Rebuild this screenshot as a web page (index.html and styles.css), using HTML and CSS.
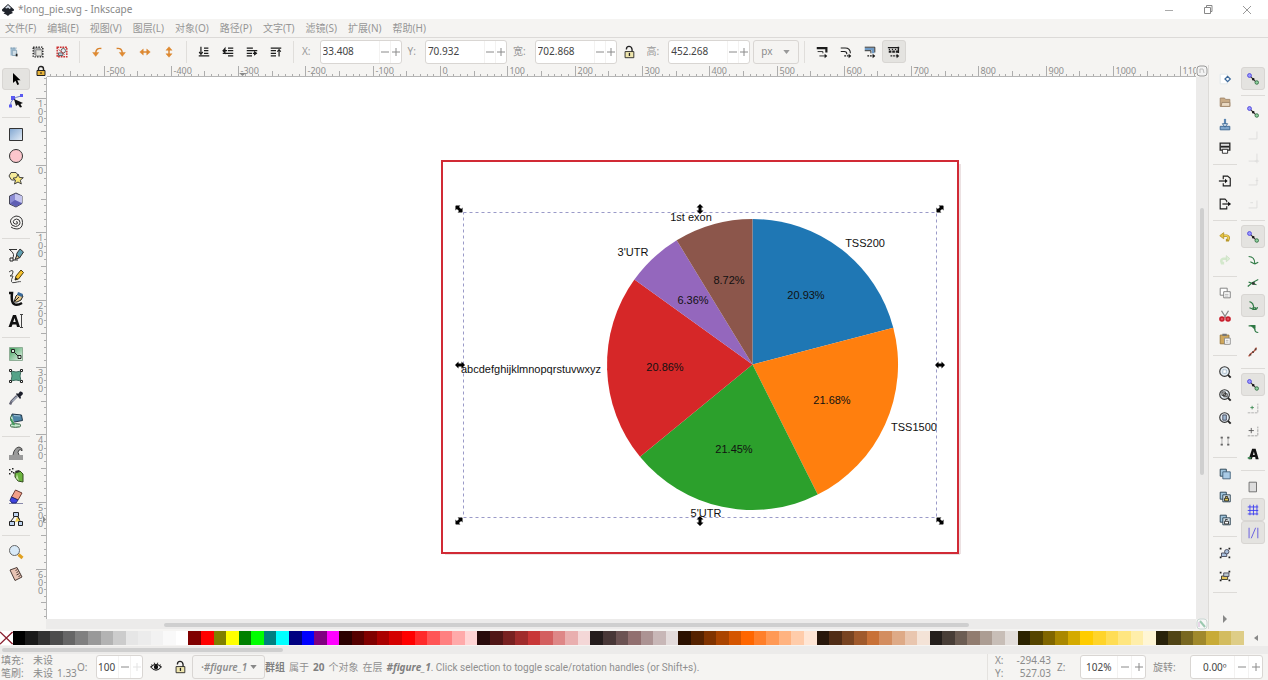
FILE: index.html
```html
<!DOCTYPE html>
<html lang="zh-CN">
<head>
<meta charset="utf-8">
<meta name="viewport" content="width=device-width, initial-scale=1">
<title>*long_pie.svg - Inkscape</title>
<link rel="stylesheet" href="styles.css">
</head>
<body>
<svg class="defs" aria-hidden="true">
  <symbol id="snap" viewBox="0 0 16 16"><path d="M5 5l6 6" stroke="#333" stroke-width="1.3"/><circle cx="4" cy="4" r="2.200" fill="#9a9aff" stroke="#4a40d8"/><circle cx="12.300" cy="12" r="2" fill="#8fd09f" stroke="#2f6b3e"/><path d="M7 7h2.500v2.500H7z" fill="#111"/></symbol>
  <symbol id="lens" viewBox="0 0 16 16"><path d="M11 11l3.500 3.500" stroke="#222" stroke-width="2.200"/><circle cx="7.500" cy="7.500" r="5.500" fill="#e3ecf3" stroke="#333" stroke-width="1.300"/></symbol>
  <symbol id="lock" viewBox="0 0 16 16"><path d="M5 5q0-3.500 3-3.500T11.500 5v3" fill="none" stroke="#222" stroke-width="1.500"/><path d="M3.500 7.500h10v7h-10z" fill="#efe6ad" stroke="#222"/><path d="M8.500 9v3.500" stroke="#222" stroke-width="1.500"/></symbol>
  <symbol id="grip" viewBox="-5 -5 10 10"><path d="M-5 0L-1.500-3.500V-1.500H1.500V-3.500L5 0L1.500 3.500V1.500H-1.500V3.500Z"/></symbol>
  <symbol id="minus" viewBox="0 0 8 8"><path d="M0 4h8" stroke="currentColor"/></symbol>
  <symbol id="plus" viewBox="0 0 8 8"><path d="M0 4h8M4 0v8" stroke="currentColor"/></symbol>
</svg>

<header class="titlebar">
  <svg class="logo" viewBox="0 0 14 14"><path d="M7 1L13 6.500Q13.500 8 10.500 8.500L12 10L8.500 11.500L7 13L5 11.500L2.500 10.500L4 9Q.500 8.500 1 6.500Z" fill="#20242c"/><path d="M7 2L4 5l2 .5L7 4.500 8.500 6 10 5Z" fill="#d9e1ec"/></svg>
  <h1>*long_pie.svg - Inkscape</h1>
  <button aria-label="最小化"><svg viewBox="0 0 10 10"><path d="M1 5.500h8" stroke="#aaa"/></svg></button>
  <button aria-label="还原"><svg viewBox="0 0 10 10"><path d="M1.500 2.500h6v6h-6zM3.500 2V.500h5.500v6H8" fill="none" stroke="#888"/></svg></button>
  <button aria-label="关闭"><svg viewBox="0 0 10 10"><path d="M1 1l8 8M9 1L1 9" stroke="#999"/></svg></button>
</header>

<nav class="menubar">
  <a href="#file">文件(F)</a><a href="#edit">编辑(E)</a><a href="#view">视图(V)</a><a href="#layer">图层(L)</a><a href="#object">对象(O)</a><a href="#path">路径(P)</a><a href="#text">文字(T)</a><a href="#filter">滤镜(S)</a><a href="#ext">扩展(N)</a><a href="#help">帮助(H)</a>
</nav>

<div class="optionbar">
  <button class="tool" aria-label="全选"><svg viewBox="0 0 16 16"><path d="M4 3h6v9H4z" fill="#9ebcd2"/><path d="M6 6h5v6H6z" fill="#cfdde6" stroke="#86a2b5"/><path d="M4 3.500h7" stroke="#7895a8" stroke-dasharray="2 1"/><path d="M10 10h2v3h-2z" fill="#222"/></svg></button>
  <button class="tool" aria-label="在所有图层全选"><svg viewBox="0 0 16 16"><path d="M3.500 3.500h7v7h-7z" fill="#c7cbcd" stroke="#777"/><path d="M5.500 5.500h7v7h-7z" fill="#e5e5e0" stroke="#777"/><path d="M2.500 2.500h11v11h-11z" fill="none" stroke="#111" stroke-width="1.500" stroke-dasharray="1.500 1.500"/></svg></button>
  <button class="tool" aria-label="取消选择"><svg viewBox="0 0 16 16"><path d="M2.500 2.500h11v11h-11z" fill="#eee" stroke="#cc3030" stroke-width="1.600" stroke-dasharray="2 1"/><path d="M4 9h5v3H4z" fill="#b8cbe0" stroke="#555"/><circle cx="9.500" cy="6.500" r="2.500" fill="#e9eef4" stroke="#555"/><path d="M4 5l7 6" stroke="#c44"/></svg></button>
  <span class="vsep"></span>
  <button class="tool" aria-label="逆时针旋转"><svg viewBox="0 0 16 16" class="orange"><path d="M13 4Q7 3 6.500 9" fill="none"/><path d="M3 8.500h7L6.500 13z"/></svg></button>
  <button class="tool" aria-label="顺时针旋转"><svg viewBox="0 0 16 16" class="orange"><path d="M3 4Q9 3 9.500 9" fill="none"/><path d="M6 8.500h7L9.500 13z"/></svg></button>
  <button class="tool" aria-label="水平翻转"><svg viewBox="0 0 16 16" class="orange"><path d="M4 8h8" fill="none"/><path d="M6 4.500v7L2 8zM10 4.500v7L14 8z"/></svg></button>
  <button class="tool" aria-label="垂直翻转"><svg viewBox="0 0 16 16" class="orange"><path d="M8 4v8" fill="none"/><path d="M4.500 6h7L8 2zM4.500 10h7L8 14z"/></svg></button>
  <span class="vsep"></span>
  <button class="tool" aria-label="移至底层"><svg viewBox="0 0 16 16" class="ink"><path d="M8 3.500h5M8 6.500h5M8 9.500h5M2 12.500h12M4.500 2v8"/><path d="M2.500 8l2 2.500 2-2.500"/></svg></button>
  <button class="tool" aria-label="降低一层"><svg viewBox="0 0 16 16" class="ink"><path d="M8 3.500h6M8 6.500h6M2 9.500h12M8 12.500h6M2 6.500h5"/><path d="M4.500 4v5l-2-2.500z" fill="#1c1c1c"/></svg></button>
  <button class="tool" aria-label="提升一层"><svg viewBox="0 0 16 16" class="ink"><path d="M2 3.500h7M2 6.500h12M2 9.500h6M2 12.500h6M9 9.500h4"/><path d="M11 8l2 1.500-2 1.500z" fill="#1c1c1c"/></svg></button>
  <button class="tool" aria-label="移至顶层"><svg viewBox="0 0 16 16" class="ink"><path d="M2 3.500h12M2 6.500h6M2 9.500h6M2 12.500h6M11.500 13V5"/><path d="M9.500 7.500l2-2 2 2"/></svg></button>
  <span class="vsep"></span>
  <label class="lbl" for="fx">X:</label>
  <span class="spin wide"><input id="fx" value="33.408"><button aria-label="减小 X"><svg><use href="#minus"/></svg></button><button aria-label="增大 X"><svg><use href="#plus"/></svg></button></span>
  <label class="lbl" for="fy">Y:</label>
  <span class="spin wide"><input id="fy" value="70.932"><button aria-label="减小 Y"><svg><use href="#minus"/></svg></button><button aria-label="增大 Y"><svg><use href="#plus"/></svg></button></span>
  <label class="lbl" for="fw">宽:</label>
  <span class="spin wide"><input id="fw" value="702.868"><button aria-label="减小宽"><svg><use href="#minus"/></svg></button><button aria-label="增大宽"><svg><use href="#plus"/></svg></button></span>
  <button class="tool" aria-label="锁定比例"><svg viewBox="0 0 16 16"><use href="#lock"/></svg></button>
  <label class="lbl" for="fh">高:</label>
  <span class="spin wide"><input id="fh" value="452.268"><button aria-label="减小高"><svg><use href="#minus"/></svg></button><button aria-label="增大高"><svg><use href="#plus"/></svg></button></span>
  <span class="combo"><select aria-label="单位"><option>px</option></select><svg viewBox="0 0 8 5"><path d="M0 0h8L4 5z" fill="#999"/></svg></span>
  <span class="vsep"></span>
  <button class="tool" aria-label="缩放笔廓"><svg viewBox="0 0 16 16" class="ink"><path d="M2 3.500h11v5" stroke-width="2.500"/><path d="M3 7.500h6v2M5 12.500h8" stroke-width="1"/><path d="M11 10l3 2.500-3 2.500z" fill="#1c1c1c" stroke="none"/></svg></button>
  <button class="tool" aria-label="缩放圆角"><svg viewBox="0 0 16 16" class="ink"><path d="M2 3.500h5q6 0 6 6M2 7.500h4q3 0 3 3" stroke-width="1.200"/><path d="M6 12.500h7" stroke-dasharray="2 1"/><path d="M11 10l3 2.500-3 2.500z" fill="#1c1c1c" stroke="none"/></svg></button>
  <button class="tool" aria-label="移动渐变"><svg viewBox="0 0 16 16" class="ink"><path d="M2 4.500h9.500v5" stroke="#6f9ac5" stroke-width="3"/><path d="M2 2.500h11.500v6M2 6.500h7v3" stroke-width="1"/><path d="M5 12.500h8" stroke-dasharray="2 1"/><path d="M11 10l3 2.500-3 2.500z" fill="#1c1c1c" stroke="none"/></svg></button>
  <button class="tool on" aria-label="移动图案" aria-pressed="true"><svg viewBox="0 0 16 16" class="ink"><path d="M1 3h13M13 2v7" stroke-width="1.600"/><path d="M2 7.500h12" stroke-width="2.500" stroke-dasharray="3 1"/><path d="M2 5h11" stroke-dasharray="1.500 2"/><path d="M4 12.500h9" stroke-dasharray="2 1"/><path d="M11 10l3 2.500-3 2.500z" fill="#1c1c1c" stroke="none"/></svg></button>
</div>

<main class="middle">
  <div class="toolbox">
    <button class="tool on" aria-label="选择" aria-pressed="true"><svg viewBox="0 0 16 16"><path d="M5 2v10l2.500-2.300L9.300 14l1.800-.8L9.300 9.200h3.200z" fill="#000"/></svg></button>
    <button class="tool" aria-label="节点"><svg viewBox="0 0 16 16"><path d="M2.500 13Q2 5 13 3" fill="none" stroke="#6a78c8"/><path d="M1 11.500h3v3H1zM3 3h4v4H3zM12 1h3v3h-3z" fill="#5a5af0"/><path d="M6 6l9 4-2.500 1 1.500 3-2 .5-2-3L8 13z" fill="#111"/></svg></button>
    <hr>
    <button class="tool" aria-label="矩形"><svg viewBox="0 0 16 16"><defs><linearGradient id="gb" x2="1" y2="1"><stop stop-color="#7fa5d0"/><stop offset="1" stop-color="#e6eef8"/></linearGradient></defs><path d="M1.500 2.500h13v12h-13z" fill="url(#gb)" stroke="#333"/></svg></button>
    <button class="tool" aria-label="椭圆"><svg viewBox="0 0 16 16"><circle cx="8" cy="8" r="6.500" fill="#fcc6cc" stroke="#333"/></svg></button>
    <button class="tool" aria-label="星形"><svg viewBox="0 0 16 16"><path d="M3 2.500h5l2.500 3-2 4.500h-5L1 6z" fill="#f5ea9a" stroke="#444"/><path d="M10 4l1.500 3.500 3.800.2-3 2.500 1 3.800L10 12l-3.500 2 1-3.800-2.500-2 3.500-.7z" fill="#fbe97a" stroke="#444"/></svg></button>
    <button class="tool" aria-label="3D 盒子"><svg viewBox="0 0 16 16"><path d="M1.500 4L8 1l6 3v7.500L8 15l-6.500-3z" fill="#8c8cd4" stroke="#445"/><path d="M7 1.800L14 4v7L7 8z" fill="#c4c4ee"/><path d="M2 11.500L7 8l7 3.500L8 14.500z" fill="#5f5fb4"/></svg></button>
    <button class="tool" aria-label="螺旋"><svg viewBox="0 0 16 16"><path d="M8 8q1.500-1 1.500.8T7.300 10Q5 9.500 5.300 7.500T8.500 5q3.500.3 3.500 3.500T7.500 12.500Q3 12 2.500 8T8 2q6.500.3 6.500 6.500T9 15q-4-.2-6-2" fill="none" stroke="#333"/></svg></button>
    <hr>
    <button class="tool" aria-label="钢笔"><svg viewBox="0 0 16 16"><path d="M1 2.500h8M2 3q6 4 2 9.500M3 13h7" fill="none" stroke="#333"/><path d="M2 11h3v3H2z" fill="#fff" stroke="#222"/><path d="M8 11l1-5 3-4 3.500 3-4 6z" fill="#5f9fb2" stroke="#333"/><path d="M7 12.500l2-4 2.500 2z" fill="#f0d9a0" stroke="#333"/></svg></button>
    <button class="tool" aria-label="铅笔"><svg viewBox="0 0 16 16"><path d="M1 3q4-3 4 0T2 7h3q-4 8 2 6.500T13 13" fill="none" stroke="#444"/><path d="M7 11l1-4 5-6 2.500 2.500-5 6.500z" fill="#f6c12d" stroke="#4a3c10"/><path d="M7 11l.7-2.500L10 10z" fill="#222"/></svg></button>
    <button class="tool" aria-label="书法"><svg viewBox="0 0 16 16"><path d="M1 2h3q-1 9 2 11t8-1" fill="none" stroke="#111" stroke-width="2.500"/><path d="M6 11l2-6 3-3 4 3-2 4-4 2z" fill="#e8c98a" stroke="#222"/><path d="M10 1l5 2-1 3-5-2z" fill="#3b6a9a"/><path d="M7 10l4-4" stroke="#222"/></svg></button>
    <button class="tool" aria-label="文字"><svg viewBox="0 0 16 16"><path d="M5 2h3l4 12H9L8.300 11.500H4.500L3.500 14H.500zM5.200 9h2.500L6.500 5z" fill="#111"/><path d="M12 1.500h3M13.500 2v12M12 14.500h3" stroke="#444"/></svg></button>
    <hr>
    <button class="tool" aria-label="渐变"><svg viewBox="0 0 16 16"><defs><linearGradient id="gg" x2="1" y2="1"><stop stop-color="#3f9f5c"/><stop offset="1" stop-color="#e9f6ec"/></linearGradient></defs><path d="M1.500 1.500h13v13h-13z" fill="url(#gg)" stroke="#8fae96"/><path d="M5 5l6 6" stroke="#222"/><path d="M3.500 3.500h3v3h-3zM10 9.500h3v3h-3z" fill="#d7efdc" stroke="#222"/></svg></button>
    <button class="tool" aria-label="网格渐变"><svg viewBox="0 0 16 16"><path d="M3 3q5 2 10 0-2 5 0 10-5-2-10 0 2-5 0-10" fill="#54a388" stroke="#3d6f60"/><path d="M1.500 1.500h2v2h-2zM12.500 1.500h2v2h-2zM1.500 12.500h2v2h-2zM12.500 12.500h2v2h-2z" fill="#fff" stroke="#222"/></svg></button>
    <button class="tool" aria-label="取色器"><svg viewBox="0 0 16 16"><path d="M9 6L3.500 11.500 2 14.500" fill="none" stroke="#667" stroke-width="2.500"/><path d="M9 6.500L4 11.500" stroke="#cfe0ee"/><path d="M8 4l4 5 1-1-.5-1.500L15 4q0-3-3-2.500L10 4 9 3z" fill="#1c1f2b"/></svg></button>
    <button class="tool" aria-label="颜料桶"><svg viewBox="0 0 16 16"><ellipse cx="7.500" cy="13.500" rx="5.500" ry="1.800" fill="#c8eed0" stroke="#2d5a3a"/><path d="M4 2l9.500 1 1 5.500-8 1.500Q3 8 4 2z" fill="#4e84a6" stroke="#23374a"/><path d="M6 3.500l6 .5" stroke="#9fc0d4"/><path d="M4 3Q1.500 5 3 9l3 1.500" fill="#b7e2cb" stroke="#2d5a3a"/><path d="M3.500 7q0 4 3 6" fill="none" stroke="#3f9f5c" stroke-width="1.500"/></svg></button>
    <hr>
    <button class="tool" aria-label="微调"><svg viewBox="0 0 16 16"><path d="M1 10h4q1-7 6-8 4 1 3 4-1-2-3-1-2 2 0 5h4v5H1z" fill="#9a9a9a"/><path d="M5 10q1-7 6-8 4 1 3 4-1-2-3-1-2 2 0 5" fill="none" stroke="#444"/></svg></button>
    <button class="tool" aria-label="喷涂"><svg viewBox="0 0 16 16"><path d="M7 6l5-2 3 3v8l-5-1-3-4z" fill="#6cb43f" stroke="#344d20"/><path d="M7 4l4-1 1 2-4 1z" fill="#333"/><path d="M9 7l-1 4 3 3z" fill="#c9e9ac"/><path d="M1 2h1.500v1.500H1zM4 1h1.500v1.500H4zM3 4h1.500v1.500H3zM1 6h1.500v1.500H1zM5 5h1.500v1.500H5z" fill="#222"/></svg></button>
    <button class="tool" aria-label="橡皮"><svg viewBox="0 0 16 16"><path d="M1 14.500h14" stroke="#88a"/><path d="M7.500 1l6.500 3-4 7-6.500-3z" fill="#f1a088" stroke="#6b3b34"/><path d="M3.500 8l6.500 3-2 3H4l-2-2.500z" fill="#3f43e0" stroke="#222a78"/></svg></button>
    <button class="tool" aria-label="连接器"><svg viewBox="0 0 16 16"><path d="M6 6L3 10M10 6l2 4M8 5q4 1 3 6" fill="none" stroke="#222"/><path d="M9 6l3 4-5 1z" fill="#f0cf52"/><path d="M5.500 1.500h5v4h-5zM1.500 10.500h5v4h-5zM10.500 10.500h4v4h-4z" fill="#bcd2ee" stroke="#222"/></svg></button>
    <hr>
    <button class="tool" aria-label="缩放"><svg viewBox="0 0 16 16"><path d="M10.500 10.500l4 3.500" stroke="#e0a020" stroke-width="3"/><circle cx="6.500" cy="6.500" r="5" fill="#d8e9f7" stroke="#666"/></svg></button>
    <button class="tool" aria-label="测量"><svg viewBox="0 0 16 16"><path d="M2 4l7-2.500L14 11l-7 3.500z" fill="#e8c3b4" stroke="#4d3d38"/><path d="M9.500 3.500l-2 1M10.500 5.500l-2 1M11.500 7.500l-3 1.500M12.500 9.500l-2 1" stroke="#4d3d38"/></svg></button>
  </div>

  <div class="workspace">
    <button class="corner" aria-label="锁定参考线"><svg viewBox="0 0 12 12"><path d="M3.500 6V4q0-2.500 2.500-2.500T8.500 4v2" fill="none" stroke="#222" stroke-width="1.400"/><path d="M2 5.500h8v5H2z" fill="#e7b33a" stroke="#222"/><path d="M6 7v2" stroke="#222"/></svg></button>
    <svg class="hruler" id="hruler" aria-hidden="true"></svg>
    <button class="corner" aria-label="显示模式"><svg viewBox="0 0 12 12"><rect x="1" y="1" width="10" height="10" rx="3" fill="#f3f3f3" stroke="#999"/><path d="M4 8V4h3l1 4" fill="none" stroke="#bbb"/></svg></button>
    <svg class="vruler" id="vruler" aria-hidden="true"></svg>
    <div class="canvas">
      <svg class="drawing" role="img" aria-label="饼图">
        <g transform="translate(-47 -77)">
          <path d="M960 164V554H445" fill="none" stroke="#d9c3c5"/>
          <path d="M442 161H958V553H442Z" fill="#fff" stroke="#d12a35" stroke-width="2"/>
          <path d="M752.500 364.500V219A145.500 145.500 0 0 1 893.300 327.700Z" fill="#1f77b4"/>
          <path d="M752.500 364.500L893.300 327.700A145.500 145.500 0 0 1 817.700 494.600Z" fill="#ff7f0e"/>
          <path d="M752.500 364.500L817.700 494.600A145.500 145.500 0 0 1 640 456.800Z" fill="#2ca02c"/>
          <path d="M752.500 364.500L640 456.800A145.500 145.500 0 0 1 634.400 279.600Z" fill="#d62728"/>
          <path d="M752.500 364.500L634.400 279.600A145.500 145.500 0 0 1 676.700 240.300Z" fill="#9467bd"/>
          <path d="M752.500 364.500L676.700 240.300A145.500 145.500 0 0 1 752.500 219Z" fill="#8c564b"/>
          <path d="M463.500 212.500H936.500V517.500H463.500Z" fill="none" stroke="#9a9ac8" stroke-dasharray="3 3"/>
          <g class="labels">
            <text x="865" y="247">TSS200</text><text x="914" y="431">TSS1500</text><text x="706" y="517">5'UTR</text><text x="531" y="373">abcdefghijklmnopqrstuvwxyz</text><text x="633" y="256">3'UTR</text><text x="691" y="221">1st exon</text>
            <text x="806" y="299">20.93%</text><text x="832" y="404">21.68%</text><text x="734" y="453">21.45%</text><text x="665" y="371">20.86%</text><text x="693" y="304">6.36%</text><text x="729" y="284">8.72%</text>
          </g>
          <g>
            <use href="#grip" x="-5" y="-5" width="10" height="10" transform="translate(459 209) rotate(45)"/>
            <use href="#grip" x="-5" y="-5" width="10" height="10" transform="translate(700 209) rotate(90)"/>
            <use href="#grip" x="-5" y="-5" width="10" height="10" transform="translate(940 209) rotate(-45)"/>
            <use href="#grip" x="-5" y="-5" width="10" height="10" transform="translate(460 365)"/>
            <use href="#grip" x="-5" y="-5" width="10" height="10" transform="translate(940 365)"/>
            <use href="#grip" x="-5" y="-5" width="10" height="10" transform="translate(459 521) rotate(-45)"/>
            <use href="#grip" x="-5" y="-5" width="10" height="10" transform="translate(700 521) rotate(90)"/>
            <use href="#grip" x="-5" y="-5" width="10" height="10" transform="translate(940 521) rotate(45)"/>
          </g>
        </g>
      </svg>
    </div>
    <div class="vscroll"><span></span></div>
    <div class="hscroll"><span></span></div>
    <button class="corner" aria-label="色彩管理"><svg viewBox="0 0 12 12"><rect x="1" y="1" width="10" height="10" rx="3" fill="#f7f7f7" stroke="#c9d6d2"/><path d="M4 3l5 6" stroke="#9cc9b0" stroke-width="2"/><path d="M3 4v5" stroke="#d8b3d8"/></svg></button>
  </div>

  <div class="commands">
    <button class="tool" aria-label="新建"><svg viewBox="0 0 16 16"><path d="M2.500 2.500h8v11h-8z" fill="#fff" stroke="#dfe6ea"/><path d="M11 5l3 3-3 3-3-3z" fill="#fff" stroke="#3d6a9c" stroke-width="1.500"/></svg></button>
    <button class="tool" aria-label="打开"><svg viewBox="0 0 16 16"><path d="M2.500 3.500h5l1 1.500h5v8h-11z" fill="#c9ab86" stroke="#9e8468"/><path d="M4.500 8.500h9v4.500h-10z" fill="#ead9c2" stroke="#9e8468"/></svg></button>
    <button class="tool" aria-label="保存"><svg viewBox="0 0 16 16"><path d="M2.500 9.500h11v4h-11z" fill="#7fa6cc" stroke="#35618f"/><path d="M8 1v6" stroke="#5b86b3" stroke-width="2.500"/><path d="M5 6.500h6l-3 4z" fill="#dce9f5" stroke="#35618f"/></svg></button>
    <button class="tool" aria-label="打印"><svg viewBox="0 0 16 16"><path d="M2.500 2.500h11v8h-11z" fill="#ddd" stroke="#222" stroke-width="1.500"/><path d="M3 6.500h10" stroke="#222" stroke-width="2"/><path d="M5 9.500h6v4.500H5z" fill="#fff" stroke="#222"/></svg></button>
    <hr>
    <button class="tool" aria-label="导入"><svg viewBox="0 0 16 16" class="ink"><path d="M6 6V2.500h5L14 5v8.500H6v-3" stroke-width="1.300"/><path d="M1 8h8"/><path d="M8 5.500v5L11 8z" fill="#111" stroke="none"/></svg></button>
    <button class="tool" aria-label="导出"><svg viewBox="0 0 16 16" class="ink"><path d="M10 6V4.500L8 2.500H2.500v11H10v-3" stroke-width="1.300"/><path d="M5 8h8"/><path d="M11.500 5.500v5l3.500-2.500z" fill="#111" stroke="none"/></svg></button>
    <hr>
    <button class="tool" aria-label="撤销"><svg viewBox="0 0 16 16"><path d="M5 6.500h5q3.500 1 1.500 5H9" fill="none" stroke="#b8982a" stroke-width="3"/><path d="M5 6.500h5q3 1 1.500 4.500" fill="none" stroke="#efcf55" stroke-width="1.500"/><path d="M6.500 3v7L2 6.500z" fill="#e3c244" stroke="#b8982a"/></svg></button>
    <button class="tool" aria-label="重做" disabled><svg viewBox="0 0 16 16"><path d="M11 6.500H6q-3.500 1-1.500 5H7" fill="none" stroke="#d3e8cc" stroke-width="3"/><path d="M9.500 3v7l4-3.500z" fill="#dcefd6" stroke="#cde0c6"/></svg></button>
    <hr>
    <button class="tool" aria-label="复制"><svg viewBox="0 0 16 16"><path d="M2.500 2.500h8v8h-8z" fill="#fff" stroke="#777"/><path d="M6.500 6.500h7.500v7h-7.500z" fill="#fff" stroke="#777"/><path d="M8 9.500h4M8 11.500h4" stroke="#aaa"/></svg></button>
    <button class="tool" aria-label="剪切"><svg viewBox="0 0 16 16"><path d="M4 2l5 8M12 2L7 10" stroke="#888" stroke-width="1.500"/><circle cx="4.500" cy="11.500" r="2.200" fill="#e35a66" stroke="#c8202e" stroke-width="2"/><circle cx="11.500" cy="11.500" r="2.200" fill="#e35a66" stroke="#c8202e" stroke-width="2"/></svg></button>
    <button class="tool" aria-label="粘贴"><svg viewBox="0 0 16 16"><path d="M2.500 3.500h10v10h-10z" fill="#cfa75c" stroke="#94733a"/><path d="M5 2h5v2.500H5z" fill="#777"/><path d="M7.500 7h6.500v7H7.500z" fill="#fff" stroke="#888"/><path d="M9 9.500h3M9 11.500h3" stroke="#aaa"/></svg></button>
    <hr>
    <button class="tool" aria-label="缩放选区"><svg viewBox="0 0 16 16"><use href="#lens"/><path d="M5.500 5.500h4v4h-4z" fill="#fff" stroke="#6b8ba5" stroke-dasharray="1 1"/></svg></button>
    <button class="tool" aria-label="缩放绘图"><svg viewBox="0 0 16 16"><use href="#lens"/><path d="M4.500 4.500h4v4h-4zM6.500 6.500h4v3.500h-4z" fill="#ccc" stroke="#333"/></svg></button>
    <button class="tool" aria-label="缩放页面"><svg viewBox="0 0 16 16"><use href="#lens"/><path d="M5.500 4.500h4v6h-4z" fill="#9fb9d3" stroke="#445"/></svg></button>
    <button class="tool" aria-label="页宽"><svg viewBox="0 0 16 16"><path d="M4.500 3v10M11.500 3v10" stroke="#aaa"/><path d="M3 3h2.500v2H3zM10.500 3H13v2h-2.500zM3 11h2.500v2H3zM10.500 11H13v2h-2.500z" fill="#666"/></svg></button>
    <hr>
    <button class="tool" aria-label="再制"><svg viewBox="0 0 16 16"><path d="M2.500 2.500h7v8h-7z" fill="#9fc4dd" stroke="#223a4c"/><path d="M5.500 5.500h8.500v8h-8.500z" fill="#a9cbe6" stroke="#41607a"/></svg></button>
    <button class="tool" aria-label="克隆"><svg viewBox="0 0 16 16"><path d="M2.500 2.500h7v8h-7z" fill="#9fc4dd" stroke="#223a4c"/><path d="M5.500 5.500h8.500v8h-8.500z" fill="#d7e3ea" stroke="#223a4c"/><path d="M7.500 9.500h4.500v3H7.500zM8.500 9V7.500h2.500V9" fill="#e5ce56" stroke="#222"/></svg></button>
    <button class="tool" aria-label="断开克隆"><svg viewBox="0 0 16 16"><path d="M2.500 2.500h7v8h-7z" fill="#9fc4dd" stroke="#223a4c"/><path d="M5.500 5.500h8.500v8h-8.500z" fill="#d7e3ea" stroke="#223a4c"/><path d="M7.500 9.500h4.500v3H7.500zM8.500 9V7.500h2.500" fill="#fff" stroke="#222"/></svg></button>
    <hr>
    <button class="tool" aria-label="群组"><svg viewBox="0 0 16 16"><path d="M4 8h6v4H4z" fill="#a9c0dc" stroke="#445"/><circle cx="10" cy="6.500" r="2.500" fill="#a9c0dc" stroke="#445"/><path d="M2 2h2v2H2zM12 2h2v2h-2zM2 12h2v2H2zM12 12h2v2h-2z" fill="#222"/></svg></button>
    <button class="tool" aria-label="解散群组"><svg viewBox="0 0 16 16"><path d="M4 8h7v4H4z" fill="#e3c45c" stroke="#332"/><path d="M6.500 4.500h6v4h-6z" fill="#bcc8cf" stroke="#445"/><path d="M2 3h2v2H2zM12 2h2v2h-2zM2 12h2v2H2zM12 12h2v2h-2z" fill="#222"/></svg></button>
    <hr>
    <button class="more" aria-label="更多命令"><svg viewBox="0 0 8 8"><path d="M2 0v8l4-4z" fill="#888"/></svg></button>
  </div>

  <div class="snapbar">
    <button class="tool on" aria-label="启用吸附" aria-pressed="true"><svg><use href="#snap"/></svg></button>
    <hr>
    <button class="tool" aria-label="吸附边界框"><svg><use href="#snap"/></svg></button>
    <button class="tool faint" aria-label="吸附边"><svg viewBox="0 0 16 16"><path d="M3 12.500h9.500V4"/></svg></button>
    <button class="tool faint" aria-label="吸附角"><svg viewBox="0 0 16 16"><path d="M3 11.500h9.500V3M10 11.500h5M12.500 10v4"/></svg></button>
    <button class="tool faint" aria-label="吸附边中点"><svg viewBox="0 0 16 16"><path d="M3 12.500h9.500V4M11 7.500h3"/></svg></button>
    <button class="tool faint" aria-label="吸附中心"><svg viewBox="0 0 16 16"><path d="M3 12.500h9.500V4M5 6.500h3"/></svg></button>
    <hr>
    <button class="tool on" aria-label="吸附节点" aria-pressed="true"><svg><use href="#snap"/></svg></button>
    <button class="tool" aria-label="吸附路径"><svg viewBox="0 0 16 16" class="green"><path d="M3 4q7 0 7 8M10 12.500l4-2M10 12.500L5 10"/></svg></button>
    <button class="tool" aria-label="吸附交点"><svg viewBox="0 0 16 16" class="green"><path d="M2 12q5-5 12-8M3 7l9 3"/><path d="M7 7h3v3H7z" fill="#333" stroke="none"/></svg></button>
    <button class="tool on" aria-label="吸附尖角" aria-pressed="true"><svg viewBox="0 0 16 16" class="green"><path d="M4 3q5 1 5 9M9 12q4 0 4-3M9 12L4 10"/><path d="M8 10h3v2H8z"/></svg></button>
    <button class="tool" aria-label="吸附平滑"><svg viewBox="0 0 16 16" class="green"><path d="M3 4.500h7v3M10 8q0 4 4 4"/><path d="M6 4h4v4z" fill="#2f6b3e"/></svg></button>
    <button class="tool" aria-label="吸附中点"><svg viewBox="0 0 16 16"><path d="M3 13q3-4 5-5t4-5" fill="none" stroke="#b8503c" stroke-width="1.500"/><path d="M4 10h2v2H4zM7 7h2v2H7zM10 4h2v2h-2z" fill="#5a3d36"/></svg></button>
    <hr>
    <button class="tool on" aria-label="吸附其他" aria-pressed="true"><svg><use href="#snap"/></svg></button>
    <button class="tool" aria-label="吸附对象中心"><svg viewBox="0 0 16 16"><path d="M2 13.500h11.500V3" fill="none" stroke="#aaa" stroke-dasharray="3 1"/><path d="M5 7.500h4M7 5.500v4" stroke="#3e8a55"/></svg></button>
    <button class="tool" aria-label="吸附旋转中心"><svg viewBox="0 0 16 16"><path d="M2 13.500h11.500V3" fill="none" stroke="#999" stroke-dasharray="3 1"/><path d="M3 7.500h6M6 4.500v6" stroke="#555"/></svg></button>
    <button class="tool" aria-label="吸附文字基线"><svg viewBox="0 0 16 16"><path d="M7 2h4l3.500 12H11l-.5-2.500H7.500L6.500 14H3zM8 9h2L9 5z" fill="#111"/><path d="M2 12.500h4" stroke="#3e8a55" stroke-width="2"/></svg></button>
    <hr>
    <button class="tool" aria-label="吸附页面"><svg viewBox="0 0 16 16"><path d="M3.500 2.500h8.500v11H3.500z" fill="#ddd" stroke="#666"/></svg></button>
    <button class="tool on" aria-label="吸附网格" aria-pressed="true"><svg viewBox="0 0 16 16"><path d="M2 4.500h12M2 8.500h12M2 12.500h12M4.500 2v12M8.500 2v12M12.500 2v12" stroke="#3a3af0"/></svg></button>
    <button class="tool on" aria-label="吸附参考线" aria-pressed="true"><svg viewBox="0 0 16 16"><path d="M3.500 2v12M13.500 2v12M6 14l5-12" stroke="#5a50e0"/></svg></button>
  </div>
</main>

<div class="palette">
  <div class="swatches" id="swatches"><button class="none" aria-label="无"><svg viewBox="0 0 13 16" preserveAspectRatio="none"><path d="M0 1l13 14M13 1L0 15" stroke="#8a2030" stroke-width="1.500"/></svg></button></div>
  <button class="more" aria-label="色板选项"><svg viewBox="0 0 8 8"><path d="M6 1v6L2 4z" fill="#888"/></svg></button>
</div>
<div class="palscroll"><span></span></div>

<footer class="status">
  <div class="style">
    <span>填充:</span><span>未设</span><span></span>
    <span>笔刷:</span><span>未设</span><span>1.33</span>
  </div>
  <label class="olabel" for="op">O:</label>
  <span class="spin op"><input id="op" value="100"><button aria-label="减小不透明度"><svg><use href="#minus"/></svg></button><button aria-label="增大不透明度" disabled><svg><use href="#plus"/></svg></button></span>
  <button class="tool" aria-label="显示图层"><svg viewBox="0 0 16 16"><path d="M2 8q6-6 12 0-6 7-12 0z" fill="#fff" stroke="#222" stroke-width="1.300"/><circle cx="8" cy="8" r="2.500" fill="#111"/><path d="M3 5l1 2M6 3l.5 2M10 3l-.5 2M13 5l-1 2" stroke="#222"/></svg></button>
  <button class="tool" aria-label="锁定图层"><svg viewBox="0 0 16 16"><use href="#lock"/></svg></button>
  <span class="combo layer"><select aria-label="当前图层"><option>·#figure_1</option></select><svg viewBox="0 0 8 5"><path d="M0 0h8L4 5z" fill="#888"/></svg></span>
  <p class="hint"><b>群组</b><span>属于</span><b>20</b><span>个对象</span><span>在层</span><span><b><i>#figure_1</i></b>. Click selection to toggle scale/rotation handles (or Shift+s).</span></p>
  <div class="coords"><span>X:</span><span>-294.43</span><span>Y:</span><span>527.03</span></div>
  <label class="zlabel" for="zm">Z:</label>
  <span class="spin zoom"><input id="zm" value="102%"><button aria-label="缩小"><svg><use href="#minus"/></svg></button><button aria-label="放大"><svg><use href="#plus"/></svg></button></span>
  <label class="rlabel" for="rt">旋转:</label>
  <span class="spin rot"><input id="rt" value="0.00º"><button aria-label="减小旋转"><svg><use href="#minus"/></svg></button><button aria-label="增大旋转"><svg><use href="#plus"/></svg></button></span>
</footer>
<script src="main.js"></script>
</body>
</html>
```

FILE: styles.css
```css
* { box-sizing: border-box; }
html, body { height: 100%; }
body {
  margin: 0;
  display: flex;
  flex-direction: column;
  overflow: hidden;
  background: #f5f4f2;
  color: #8c8c8c;
  font: 10px/13px "Noto Sans", "Noto Sans CJK SC", sans-serif;
}
button, input, select { font: inherit; color: inherit; margin: 0; padding: 0; border: 0; background: none; }
button { display: flex; align-items: center; justify-content: center; flex: none; }
svg { display: block; }
.defs { position: absolute; width: 0; height: 0; }

.titlebar { display: flex; align-items: center; height: 19px; flex: none; background: #fff; padding-right: 2px; }
.titlebar .logo { width: 14px; height: 14px; margin: 0 3px 0 1px; }
.titlebar h1 { flex: 1; margin: 0; font-size: 10px; font-weight: 400; color: #888; }
.titlebar button { width: 39px; height: 19px; }
.titlebar button svg { width: 10px; height: 10px; }

.menubar { display: flex; gap: 11px; flex: none; height: 19px; align-items: center; padding-left: 5px; border-bottom: 1px solid #dcdad8; }
.menubar a { color: #969696; text-decoration: none; white-space: nowrap; }

.tool { width: 24px; height: 23px; border: 1px solid transparent; border-radius: 3px; }
.tool svg { width: 14px; height: 14px; }
.tool.on { background: #e4e3e0; border-color: #d8d6d3; }
.orange { stroke: #d9822b; fill: #e08a30; stroke-width: 1.6; }
.orange path + path { stroke-width: 0.5; }
.ink { stroke: #1c1c1c; fill: none; stroke-width: 1.4; }
.green { stroke: #2f7a45; fill: none; stroke-width: 1.3; }
.faint svg { stroke: #dcdcda; fill: none; }
hr { width: 24px; height: 1px; margin: 5px auto 4px; border: 0; background: #dddbd8; flex: none; }

.optionbar { display: flex; align-items: center; flex: none; height: 27px; padding-left: 2px; white-space: nowrap; }
.vsep { width: 1px; height: 22px; margin: 0 5px; background: #e0dedb; flex: none; }
.lbl { padding: 0 9px 0 6px; color: #999; }
.lbl:first-of-type { padding-left: 3px; }
.spin { display: flex; height: 24px; flex: none; background: #fff; border: 1px solid #d9d6d3; border-radius: 3px; color: #444; }
.spin.wide { width: 82px; }
.spin input { flex: 1; min-width: 0; padding-left: 2px; outline: 0; }
.spin button { width: 11px; color: #8a8a8a; border-left: 1px solid #f3f2f1; }
.spin button svg { width: 8px; height: 8px; }
.spin button:disabled { color: #e3e3e3; }
.combo { position: relative; display: flex; align-items: center; width: 46px; height: 24px; margin-left: 3px; border: 1px solid #d9d6d3; border-radius: 3px; flex: none; }
.combo select { appearance: none; width: 100%; height: 100%; padding-left: 7px; outline: 0; }
.combo svg { position: absolute; right: 8px; width: 7px; height: 4px; pointer-events: none; }

.middle { display: flex; flex: 1; min-height: 0; }
.toolbox, .commands, .snapbar { display: flex; flex-direction: column; align-items: center; flex: none; overflow: hidden; padding-top: 2px; }
.toolbox { width: 35px; align-items: flex-start; padding: 3px 0 0 2px; }
.toolbox .tool { width: 28px; height: 22px; }
.toolbox .tool svg { width: 16px; height: 16px; }
.toolbox hr { width: 28px; margin: 5px 0; }
.commands { width: 32px; border-left: 1px solid #dddbd8; }
.snapbar { width: 28px; padding-right: 2px; }
.commands .more { height: 44px; width: 8px; }
.more svg { width: 8px; height: 8px; }

.workspace { display: grid; flex: 1; min-width: 0; grid-template: 12px minmax(0, 1fr) 10px / 12px minmax(0, 1fr) 12px; }
.corner svg { width: 12px; height: 12px; }
.hruler, .vruler { width: 100%; height: 100%; overflow: hidden; }
.hruler { border-bottom: 1px solid #b5b5b5; }
.vruler { border-right: 1px solid #b5b5b5; }
.tick { stroke: #adadad; }
.ruler-text { font-size: 9px; fill: #8f8f8f; }
.pointer { fill: #8a8a8a; }
.canvas { background: #fff; overflow: hidden; }
.drawing { width: 100%; height: 100%; }
.labels { font: 11px "Liberation Sans", sans-serif; fill: #111; text-anchor: middle; }
.vscroll, .hscroll { display: flex; background: #ecebea; }
.vscroll { padding: 131px 4px 0; }
.vscroll span { width: 4px; height: 65%; border-radius: 2px; background: #cfcfcf; }
.hscroll { grid-column: 1 / 3; margin-left: 11px; padding: 4px 0 0 118px; }
.hscroll span { width: 78%; height: 4px; border-radius: 2px; background: #cfcfcf; }

.palette { display: flex; align-items: center; flex: none; height: 17px; }
.swatches { display: flex; flex: 1; height: 14px; margin-top: 1px; }
.swatches button { flex: 1; height: 14px; }
.swatches .none { background: #fff; }
.swatches svg { width: 100%; height: 100%; }
.palette .more { width: 24px; }
.palscroll { flex: none; height: 8px; padding: 2px 0 0 2px; background: #ecebea; }
.palscroll span { display: block; width: 281px; height: 4px; border-radius: 2px; background: #cfcfcf; }

.status { display: flex; align-items: center; flex: none; height: 26px; white-space: nowrap; }
.style { display: grid; grid-template-columns: 32px 24px 20px; width: 77px; padding-left: 1px; flex: none; }
.olabel { width: 19px; }
.spin.op { width: 47px; margin-right: 1px; }
.spin.op button { width: 12px; }
.spin.op input { padding-left: 1px; }
.spin.zoom button, .spin.rot button { width: 14px; }
.layer { width: 73px; margin-left: 0; }
.layer select { padding-left: 8px; font-style: italic; font-weight: 600; }
.layer svg { right: 7px; }
.hint { display: flex; gap: 4px; flex: 1; min-width: 0; margin: 0; overflow: hidden; font-family: Roboto, "Noto Sans CJK SC", sans-serif; color: #8f8f8f; }
.hint b { font-family: "Noto Sans", "Noto Sans CJK SC", sans-serif; color: #808080; }
.coords { display: grid; grid-template-columns: 14px 1fr; width: 70px; flex: none; padding: 0 6px 0 7px; border-left: 1px solid #e4e2df; }
.coords span:nth-child(even) { text-align: right; }
.zlabel { width: 23px; }
.spin.zoom { width: 66px; }
.spin.zoom input { padding-left: 5px; }
.rlabel { width: 44px; padding-left: 7px; }
.spin.rot { width: 73px; margin-right: 5px; }
.spin.rot input { padding-left: 12px; }
```

FILE: main.js
```js
const NS = 'http://www.w3.org/2000/svg';
const STEP = 6.73;

function add(parent, name, attrs, text) {
  const el = document.createElementNS(NS, name);
  for (const key in attrs) el.setAttribute(key, attrs[key]);
  if (text !== undefined) el.textContent = text;
  parent.appendChild(el);
}

function drawRuler(svg, origin, vertical) {
  svg.replaceChildren();
  const box = svg.getBoundingClientRect();
  const length = vertical ? box.height : box.width;
  for (let i = -60; ; i++) {
    const p = Math.round(origin + i * STEP) + 0.5;
    if (p < 0) continue;
    if (p > length) break;
    const size = i % 10 === 0 ? 11 : i % 5 === 0 ? 6 : 3;
    const d = vertical ? `M12 ${p}H${12 - size}` : `M${p} 12V${12 - size}`;
    add(svg, 'path', { d, class: 'tick' });
    if (i % 10 !== 0) continue;
    const label = String(i * 10);
    if (!vertical) {
      add(svg, 'text', { x: p + 2, y: 9, class: 'ruler-text' }, label);
    } else {
      [...label.replace('-', '')].forEach((c, n) =>
        add(svg, 'text', { x: 3, y: p + 8 + n * 8, class: 'ruler-text' }, c));
    }
  }
}

const h = document.getElementById('hruler');
const v = document.getElementById('vruler');

function drawRulers() {
  drawRuler(h, 393, false);
  drawRuler(v, 88, true);
  add(h, 'path', { d: 'M192 8h7l-3.500 3z', class: 'pointer' });
  add(v, 'path', { d: 'M8 439v7l3-3.500z', class: 'pointer' });
}
drawRulers();
window.addEventListener('resize', drawRulers);

const colors = ('000000 1a1a1a 333333 4d4d4d 666666 808080 999999 b3b3b3 cccccc e6e6e6 ececec f2f2f2 f9f9f9 ffffff ' +
  '800000 ff0000 808000 ffff00 008000 00ff00 008080 00ffff 000080 0000ff 800080 ff00ff ' +
  '2b0000 550000 800000 aa0000 d40000 ff0000 ff2a2a ff5555 ff8080 ffaaaa ffd5d5 ' +
  '280b0b 501616 782121 a02c2c c83737 d35f5f de8787 e9afaf f4d7d7 ' +
  '241c1c 483737 6c5353 916f6f ac9393 c8b7b7 e3dbdb ' +
  '2b1100 552200 803300 aa4400 d45500 ff6600 ff7f2a ff9955 ffb380 ffccaa ffe6d5 ' +
  '28170b 502d16 784421 a05a2c c87137 d38d5f deaa87 e9c6af f4e3d7 ' +
  '241f1c 483e37 6c5d53 917c6f ac9d93 c8beb7 e3dedb ' +
  '2b2200 554400 806600 aa8800 d4aa00 ffcc00 ffd42a ffdd55 ffe680 ffeeaa fff6d5 ' +
  '28220b 504416 786721 a0892c c8ab37 d3bc5f decd87').split(' ');
const swatches = document.getElementById('swatches');
for (const c of colors) {
  const b = document.createElement('button');
  b.style.background = '#' + c;
  b.setAttribute('aria-label', '#' + c);
  swatches.appendChild(b);
}
```
